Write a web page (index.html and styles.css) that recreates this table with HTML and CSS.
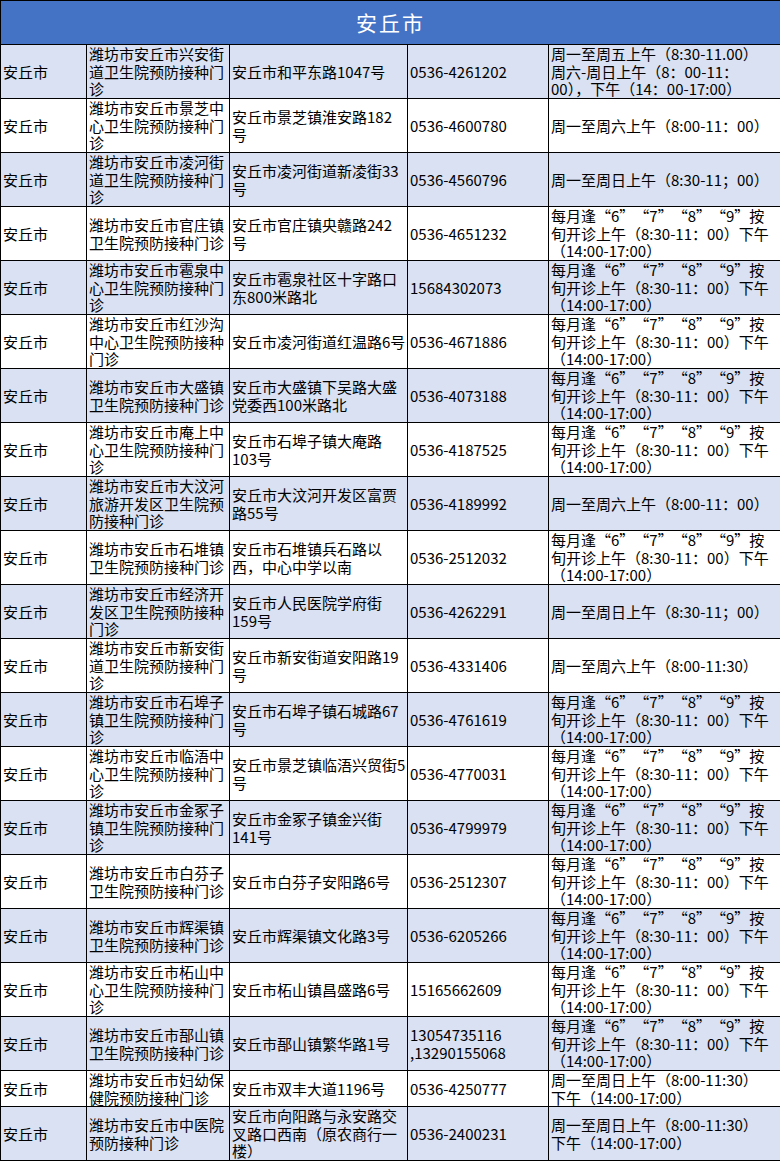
FILE: index.html
```html
<!DOCTYPE html>
<html lang="zh-CN">
<head>
<meta charset="utf-8">
<title>安丘市</title>
<link rel="stylesheet" href="styles.css">
</head>
<body>
<table class="sheet">
<colgroup>
<col class="c1"><col class="c2"><col class="c3"><col class="c4"><col class="c5">
</colgroup>
<thead>
<tr><th class="title" colspan="5">安丘市</th></tr>
</thead>
<tbody>
<tr class="alt"><td>安丘市</td><td>潍坊市安丘市兴安街<br>道卫生院预防接种门<br>诊</td><td>安丘市和平东路1047号</td><td>0536-4261202</td><td>周一至周五上午（8:30-11.00）<br>周六-周日上午（8：00-11：<br>00），下午（14：00-17:00）</td></tr>
<tr><td>安丘市</td><td>潍坊市安丘市景芝中<br>心卫生院预防接种门<br>诊</td><td>安丘市景芝镇淮安路182<br>号</td><td>0536-4600780</td><td>周一至周六上午（8:00-11：00）</td></tr>
<tr class="alt"><td>安丘市</td><td>潍坊市安丘市凌河街<br>道卫生院预防接种门<br>诊</td><td>安丘市凌河街道新凌街33<br>号</td><td>0536-4560796</td><td>周一至周日上午（8:30-11；00）</td></tr>
<tr><td>安丘市</td><td>潍坊市安丘市官庄镇<br>卫生院预防接种门诊</td><td>安丘市官庄镇央赣路242<br>号</td><td>0536-4651232</td><td>每月逢<span class="ql">“</span>6<span class="qr">”</span><span class="ql">“</span>7<span class="qr">”</span><span class="ql">“</span>8<span class="qr">”</span><span class="ql">“</span>9<span class="qr">”</span>按<br>旬开诊上午（8:30-11：00）下午<br>（14:00-17:00）</td></tr>
<tr class="alt"><td>安丘市</td><td>潍坊市安丘市雹泉中<br>心卫生院预防接种门<br>诊</td><td>安丘市雹泉社区十字路口<br>东800米路北</td><td>15684302073</td><td>每月逢<span class="ql">“</span>6<span class="qr">”</span><span class="ql">“</span>7<span class="qr">”</span><span class="ql">“</span>8<span class="qr">”</span><span class="ql">“</span>9<span class="qr">”</span>按<br>旬开诊上午（8:30-11：00）下午<br>（14:00-17:00）</td></tr>
<tr><td>安丘市</td><td>潍坊市安丘市红沙沟<br>中心卫生院预防接种<br>门诊</td><td>安丘市凌河街道红温路6号</td><td>0536-4671886</td><td>每月逢<span class="ql">“</span>6<span class="qr">”</span><span class="ql">“</span>7<span class="qr">”</span><span class="ql">“</span>8<span class="qr">”</span><span class="ql">“</span>9<span class="qr">”</span>按<br>旬开诊上午（8:30-11：00）下午<br>（14:00-17:00）</td></tr>
<tr class="alt"><td>安丘市</td><td>潍坊市安丘市大盛镇<br>卫生院预防接种门诊</td><td>安丘市大盛镇下吴路大盛<br>党委西100米路北</td><td>0536-4073188</td><td>每月逢<span class="ql">“</span>6<span class="qr">”</span><span class="ql">“</span>7<span class="qr">”</span><span class="ql">“</span>8<span class="qr">”</span><span class="ql">“</span>9<span class="qr">”</span>按<br>旬开诊上午（8:30-11：00）下午<br>（14:00-17:00）</td></tr>
<tr><td>安丘市</td><td>潍坊市安丘市庵上中<br>心卫生院预防接种门<br>诊</td><td>安丘市石埠子镇大庵路<br>103号</td><td>0536-4187525</td><td>每月逢<span class="ql">“</span>6<span class="qr">”</span><span class="ql">“</span>7<span class="qr">”</span><span class="ql">“</span>8<span class="qr">”</span><span class="ql">“</span>9<span class="qr">”</span>按<br>旬开诊上午（8:30-11：00）下午<br>（14:00-17:00）</td></tr>
<tr class="alt"><td>安丘市</td><td>潍坊市安丘市大汶河<br>旅游开发区卫生院预<br>防接种门诊</td><td>安丘市大汶河开发区富贾<br>路55号</td><td>0536-4189992</td><td>周一至周六上午（8:00-11：00）</td></tr>
<tr><td>安丘市</td><td>潍坊市安丘市石堆镇<br>卫生院预防接种门诊</td><td>安丘市石堆镇兵石路以<br>西，中心中学以南</td><td>0536-2512032</td><td>每月逢<span class="ql">“</span>6<span class="qr">”</span><span class="ql">“</span>7<span class="qr">”</span><span class="ql">“</span>8<span class="qr">”</span><span class="ql">“</span>9<span class="qr">”</span>按<br>旬开诊上午（8:30-11：00）下午<br>（14:00-17:00）</td></tr>
<tr class="alt"><td>安丘市</td><td>潍坊市安丘市经济开<br>发区卫生院预防接种<br>门诊</td><td>安丘市人民医院学府街<br>159号</td><td>0536-4262291</td><td>周一至周日上午（8:30-11；00）</td></tr>
<tr><td>安丘市</td><td>潍坊市安丘市新安街<br>道卫生院预防接种门<br>诊</td><td>安丘市新安街道安阳路19<br>号</td><td>0536-4331406</td><td>周一至周六上午（8:00-11:30）</td></tr>
<tr class="alt"><td>安丘市</td><td>潍坊市安丘市石埠子<br>镇卫生院预防接种门<br>诊</td><td>安丘市石埠子镇石城路67<br>号</td><td>0536-4761619</td><td>每月逢<span class="ql">“</span>6<span class="qr">”</span><span class="ql">“</span>7<span class="qr">”</span><span class="ql">“</span>8<span class="qr">”</span><span class="ql">“</span>9<span class="qr">”</span>按<br>旬开诊上午（8:30-11：00）下午<br>（14:00-17:00）</td></tr>
<tr><td>安丘市</td><td>潍坊市安丘市临浯中<br>心卫生院预防接种门<br>诊</td><td>安丘市景芝镇临浯兴贸街5<br>号</td><td>0536-4770031</td><td>每月逢<span class="ql">“</span>6<span class="qr">”</span><span class="ql">“</span>7<span class="qr">”</span><span class="ql">“</span>8<span class="qr">”</span><span class="ql">“</span>9<span class="qr">”</span>按<br>旬开诊上午（8:30-11：00）下午<br>（14:00-17:00）</td></tr>
<tr class="alt"><td>安丘市</td><td>潍坊市安丘市金冢子<br>镇卫生院预防接种门<br>诊</td><td>安丘市金冢子镇金兴街<br>141号</td><td>0536-4799979</td><td>每月逢<span class="ql">“</span>6<span class="qr">”</span><span class="ql">“</span>7<span class="qr">”</span><span class="ql">“</span>8<span class="qr">”</span><span class="ql">“</span>9<span class="qr">”</span>按<br>旬开诊上午（8:30-11：00）下午<br>（14:00-17:00）</td></tr>
<tr><td>安丘市</td><td>潍坊市安丘市白芬子<br>卫生院预防接种门诊</td><td>安丘市白芬子安阳路6号</td><td>0536-2512307</td><td>每月逢<span class="ql">“</span>6<span class="qr">”</span><span class="ql">“</span>7<span class="qr">”</span><span class="ql">“</span>8<span class="qr">”</span><span class="ql">“</span>9<span class="qr">”</span>按<br>旬开诊上午（8:30-11：00）下午<br>（14:00-17:00）</td></tr>
<tr class="alt"><td>安丘市</td><td>潍坊市安丘市辉渠镇<br>卫生院预防接种门诊</td><td>安丘市辉渠镇文化路3号</td><td>0536-6205266</td><td>每月逢<span class="ql">“</span>6<span class="qr">”</span><span class="ql">“</span>7<span class="qr">”</span><span class="ql">“</span>8<span class="qr">”</span><span class="ql">“</span>9<span class="qr">”</span>按<br>旬开诊上午（8:30-11：00）下午<br>（14:00-17:00）</td></tr>
<tr><td>安丘市</td><td>潍坊市安丘市柘山中<br>心卫生院预防接种门<br>诊</td><td>安丘市柘山镇昌盛路6号</td><td>15165662609</td><td>每月逢<span class="ql">“</span>6<span class="qr">”</span><span class="ql">“</span>7<span class="qr">”</span><span class="ql">“</span>8<span class="qr">”</span><span class="ql">“</span>9<span class="qr">”</span>按<br>旬开诊上午（8:30-11：00）下午<br>（14:00-17:00）</td></tr>
<tr class="alt"><td>安丘市</td><td>潍坊市安丘市郚山镇<br>卫生院预防接种门诊</td><td>安丘市郚山镇繁华路1号</td><td>13054735116<br>,13290155068</td><td>每月逢<span class="ql">“</span>6<span class="qr">”</span><span class="ql">“</span>7<span class="qr">”</span><span class="ql">“</span>8<span class="qr">”</span><span class="ql">“</span>9<span class="qr">”</span>按<br>旬开诊上午（8:30-11：00）下午<br>（14:00-17:00）</td></tr>
<tr class="short"><td>安丘市</td><td>潍坊市安丘市妇幼保<br>健院预防接种门诊</td><td>安丘市双丰大道1196号</td><td>0536-4250777</td><td>周一至周日上午（8:00-11:30）<br>下午（14:00-17:00）</td></tr>
<tr class="alt"><td>安丘市</td><td>潍坊市安丘市中医院<br>预防接种门诊</td><td>安丘市向阳路与永安路交<br>叉路口西南（原农商行一<br>楼）</td><td>0536-2400231</td><td>周一至周日上午（8:00-11:30）<br>下午（14:00-17:00）</td></tr>
</tbody>
</table>
</body>
</html>
```

FILE: styles.css
```css
html, body {
  margin: 0;
  padding: 0;
  background: #ffffff;
}

body {
  font-family: "Noto Sans CJK SC", "Noto Sans", sans-serif;
  font-size: 15px;
  line-height: 17.6px;
  color: #000000;
}

.sheet {
  border-collapse: collapse;
  table-layout: fixed;
  width: 780px;
}

.c1 { width: 86px; }
.c2 { width: 143px; }
.c3 { width: 178px; }
.c4 { width: 141px; }
.c5 { width: 232px; }

.sheet th,
.sheet td {
  border: 1px solid #000000;
  padding: 0 0 0 2px;
  text-align: left;
  vertical-align: middle;
  white-space: nowrap;
  overflow: hidden;
}

.sheet td {
  height: 53px;
}

.sheet .title {
  height: 43px;
  background: #4472c4;
  color: #ffffff;
  font-size: 21px;
  font-weight: 400;
  text-align: center;
  letter-spacing: 2px;
  padding: 0;
}

.sheet tr.alt td {
  background: #d9e1f2;
}

.sheet tr.short td {
  height: 35px;
}

.ql,
.qr {
  display: inline-block;
  width: 15px;
}

.ql {
  text-align: right;
}

.qr {
  text-align: left;
}
```
